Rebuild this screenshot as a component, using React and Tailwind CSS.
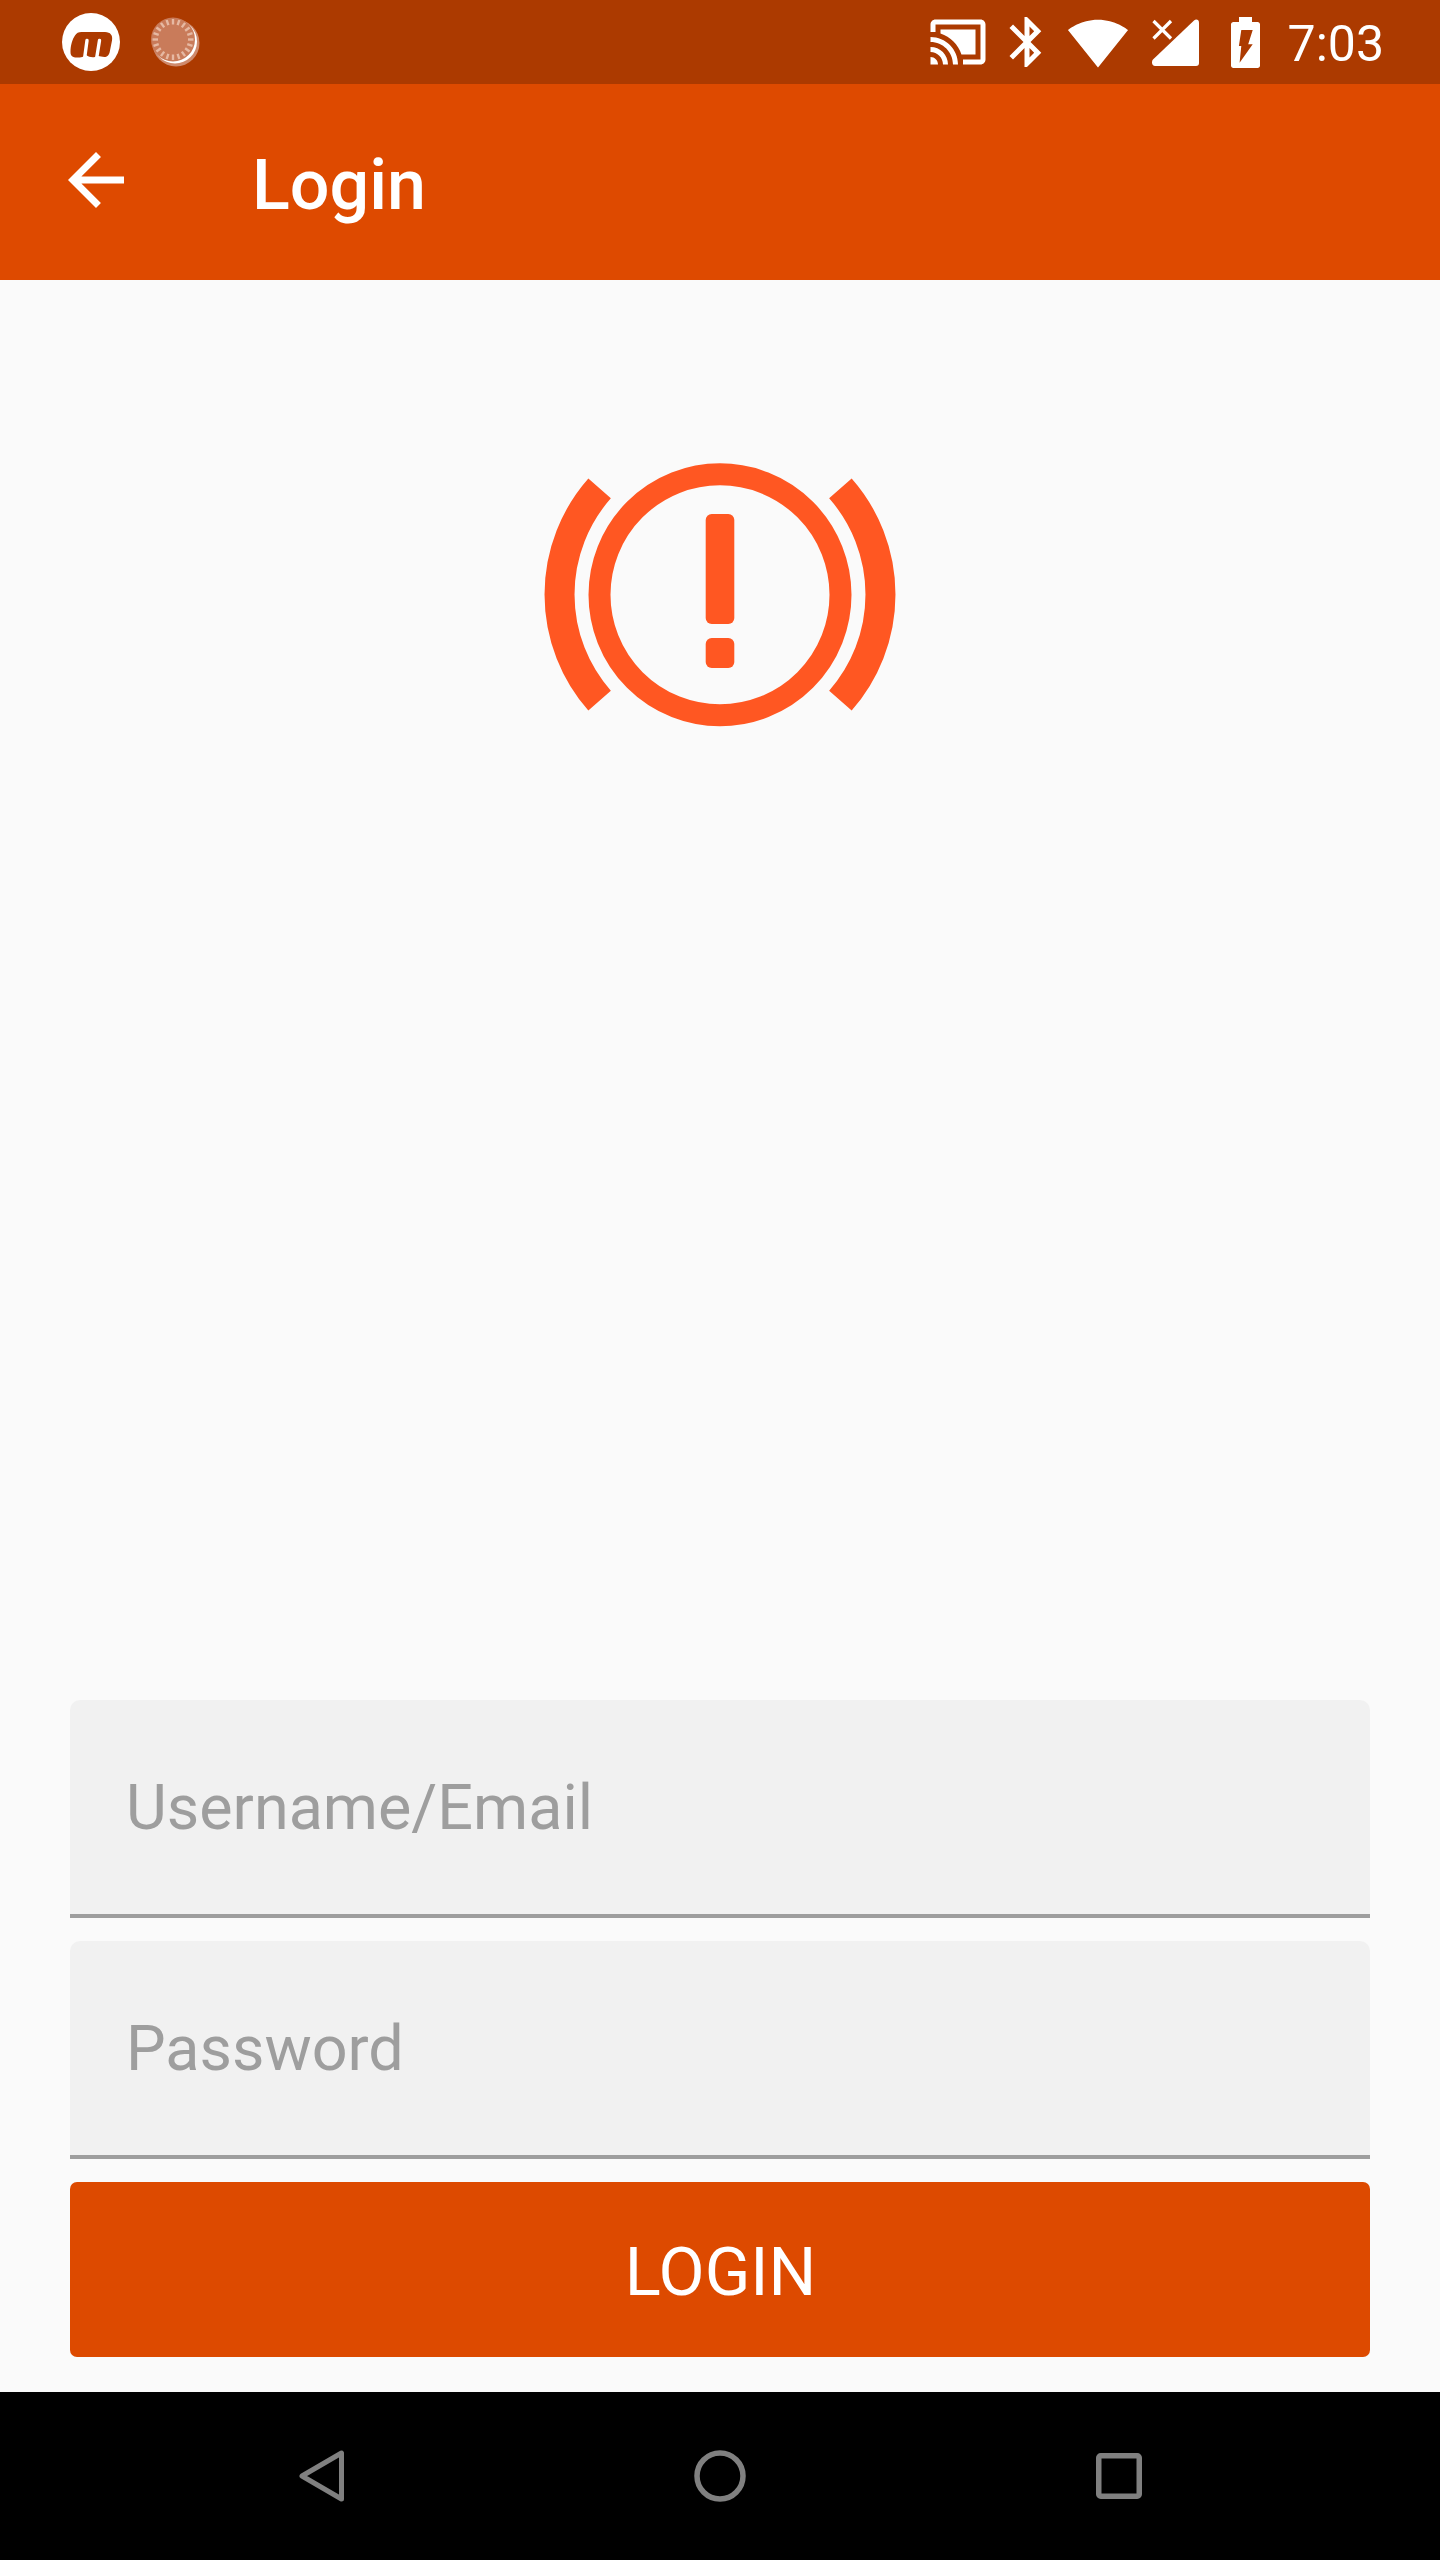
import React from 'react';

const ROBOTO = "font-['Roboto',sans-serif]";

const MLogo = () => (
    <svg width="58" height="58" viewBox="0 0 58 58" className="shrink-0">
        <circle cx="29" cy="29" r="29" fill="#ffffff" />
        <path
            d="M8.5 39C8.5 32 10.5 26 13 22.5C14.5 20 16.5 19 19.5 19L43 19C48.5 19 51 22.5 50 27.5L47.8 38.5C47 42.5 45 44 42.5 44C38.5 44 36.8 42 33 44C29.5 44.5 27 44 24 42C22 44 19 44.5 15 44.5C10.5 44.5 8.5 43 8.5 39Z"
            fill="#ac3a00"
        />
        <path d="M25 27.5L22.5 46M37.5 27.5L34.5 46" stroke="#ffffff" strokeWidth="3.4" strokeLinecap="round" fill="none" />
    </svg>
);

const SyncIcon = () => {
    const ticks = Array.from({ length: 20 }, (_, i) => (i * Math.PI) / 10);
    return (
        <svg width="50" height="50" viewBox="0 0 50 50" className="shrink-0">
            <circle cx="26" cy="26" r="23.5" fill="#cf8a6c" />
            <circle cx="25" cy="24.5" r="22" fill="#ffffff" />
            <circle cx="23" cy="22.5" r="22" fill="#c97b5a" />
            {ticks.map((a) => (
                <line
                    key={a}
                    x1={23 + 15 * Math.cos(a)}
                    y1={22.5 + 15 * Math.sin(a)}
                    x2={23 + 20.5 * Math.cos(a)}
                    y2={22.5 + 20.5 * Math.sin(a)}
                    stroke="#e6b9a3"
                    strokeWidth="2.4"
                />
            ))}
        </svg>
    );
};

const StatusIcon = ({ d, w, className }) => (
    <svg width={w} height="60" viewBox={`0 0 ${(w / 60) * 24} 24`} fill="#ffffff" className={`shrink-0 ${className}`}>
        <path d={d} />
    </svg>
);

const StatusBar = () => (
    <div className="flex h-[84px] shrink-0 items-center bg-[#ac3a00] pl-[62px] pr-[56px]">
        <MLogo />
        <div className="ml-[30px]">
            <SyncIcon />
        </div>
        <div className="ml-auto flex items-center">
            <StatusIcon
                w={60}
                d="M1 18v3h3c0-1.66-1.34-3-3-3zm0-4v2c2.76 0 5 2.24 5 5h2c0-3.87-3.13-7-7-7zm18-7H5v1.63c3.96 1.28 7.09 4.41 8.37 8.37H19V7zM1 10v2c4.97 0 9 4.03 9 9h2c0-6.08-4.93-11-11-11zm20-7H3c-1.1 0-2 .9-2 2v3h2V5h18v14h-7v2h7c1.1 0 2-.9 2-2V5c0-1.1-.9-2-2-2z"
            />
            <StatusIcon
                w={60}
                className="ml-[9px]"
                d="M17.71 7.71L12 2h-1v7.59L6.41 5 5 6.41 10.59 12 5 17.59 6.41 19 11 14.41V22h1l5.71-5.71-4.3-4.29 4.3-4.29zM13 5.83l1.88 1.88L13 9.59V5.83zm1.88 10.46L13 18.17v-3.76l1.88 1.88z"
            />
            <svg width="62" height="60" viewBox="0 0 24 23.2" fill="#ffffff" className="ml-[10px] shrink-0">
                <path d="M12.01 21.49L23.64 7c-.45-.34-4.93-4-11.64-4C5.28 3 .81 6.66.36 7l11.63 14.49.01.01.01-.01z" />
            </svg>
            <svg width="48" height="48" viewBox="0 0 48 48" className="ml-[22px] shrink-0">
                <path
                    d="M2 41.5L43 2.5C45 .8 48 1.5 48 4.5V45C48 47 47 48 45 48H4C.8 48 .2 43.5 2 41.5Z"
                    fill="#ffffff"
                />
                <path d="M2.5 3L20 20.5M20 3L2.5 20.5" stroke="#ffffff" strokeWidth="3.2" fill="none" />
            </svg>
            <svg width="29" height="51" viewBox="0 0 29 51" className="ml-[32px] shrink-0">
                <path
                    fillRule="evenodd"
                    fill="#ffffff"
                    d="M8 0H21V5H26.5C28 5 29 6 29 7.5V48.5C29 50 28 51 26.5 51H2.5C1 51 0 50 0 48.5V7.5C0 6 1 5 2.5 5H8ZM10.3 13L7.9 29H10.3L8.6 45.7L21.7 27.3H17.2L21.7 13Z"
                />
            </svg>
            <span className={`ml-[28px] mt-[4px] text-[50px] leading-none text-white ${ROBOTO}`}>7:03</span>
        </div>
    </div>
);

const Toolbar = () => (
    <div className="flex h-[196px] shrink-0 items-center bg-[#de4a00] pl-[54px]">
        <svg width="84" height="84" viewBox="0 0 24 24" fill="#ffffff" className="-mt-[5px] shrink-0">
            <path d="M20 11H7.83l5.59-5.59L12 4l-8 8 8 8 1.41-1.41L7.83 13H20v-2z" />
        </svg>
        <span className={`ml-[114px] mt-[5px] text-[70px] font-medium leading-none text-white ${ROBOTO}`}>Login</span>
    </div>
);

const BrakeLogo = () => (
    <svg width="400" height="300" viewBox="0 0 400 300" className="shrink-0">
        <circle cx="200" cy="154.8" r="120.5" fill="none" stroke="#ff5722" strokeWidth="22" />
        <path d="M79.6 48.4A160.5 160.5 0 0 0 79.6 260.6" fill="none" stroke="#ff5722" strokeWidth="30" />
        <path d="M320.4 48.4A160.5 160.5 0 0 1 320.4 260.6" fill="none" stroke="#ff5722" strokeWidth="30" />
        <rect x="185.7" y="74" width="28.6" height="110" rx="6" fill="#ff5722" />
        <rect x="185.7" y="198" width="28.6" height="30" rx="6" fill="#ff5722" />
    </svg>
);

const Field = ({ label }) => (
    <div className="flex h-[218px] items-center rounded-t-[10px] border-b-[4px] border-[#9e9e9e] bg-[#f1f1f1] pl-[56px]">
        <span className={`mt-[2px] text-[62.9px] leading-none text-[#9e9e9e] ${ROBOTO}`}>{label}</span>
    </div>
);

const NavBar = () => (
    <div className="flex h-[168px] shrink-0 items-center justify-center gap-[350px] bg-black">
        <svg width="45" height="52" viewBox="0 0 45 52" fill="none" className="shrink-0">
            <path d="M42.5 3V49L3 26Z" stroke="#808080" strokeWidth="5" strokeLinejoin="round" />
        </svg>
        <svg width="52" height="52" viewBox="0 0 52 52" fill="none" className="shrink-0">
            <circle cx="26" cy="26" r="23" stroke="#808080" strokeWidth="5.5" />
        </svg>
        <svg width="46" height="46" viewBox="0 0 46 46" fill="none" className="shrink-0">
            <rect x="2.75" y="2.75" width="40.5" height="40.5" rx="2" stroke="#808080" strokeWidth="5.5" />
        </svg>
    </div>
);

const App = () => {
    return (
        <div className="flex h-[2560px] w-[1440px] flex-col overflow-hidden bg-[#fafafa]">
            <StatusBar />
            <Toolbar />
            <main className="flex flex-1 flex-col px-[70px] pb-[35px]">
                <div className="mt-[160px] flex justify-center">
                    <BrakeLogo />
                </div>
                <div className="mt-auto flex flex-col gap-[23px]">
                    <Field label="Username/Email" />
                    <Field label="Password" />
                    <button className={`flex h-[175px] items-center justify-center rounded-[7px] bg-[#dd4a00] pt-[5px] pl-[1px] text-[67px] leading-none text-white ${ROBOTO}`}>
                        LOGIN
                    </button>
                </div>
            </main>
            <NavBar />
        </div>
    );
};

export default App;
